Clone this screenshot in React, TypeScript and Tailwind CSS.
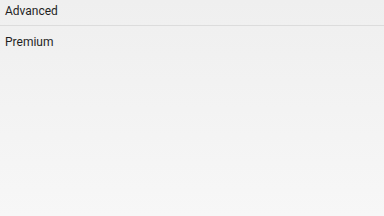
export default function App() {
  const items = ["Advanced", "Premium"];
  return (
    <div className="h-[216px] w-[384px] overflow-hidden bg-gradient-to-b from-[#efefef] to-[#f7f7f7] font-['Roboto',sans-serif] text-[12px] text-[#1f1f1f]">
      {items.map((item, i) => (
        <div
          key={item}
          className={`h-[26px] px-[5px] leading-[14px] ${i === 0 ? "pt-[4px] border-b border-[#dcdcdc]" : "pt-[9px]"}`}
        >
          {item}
        </div>
      ))}
    </div>
  );
}
